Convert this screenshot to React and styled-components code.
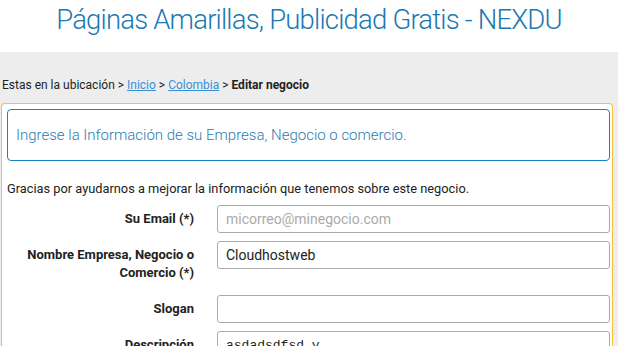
import React from "react";
import styled, { createGlobalStyle } from "styled-components";

const GlobalStyle = createGlobalStyle`
  body {
    margin: 0;
    font-family: Roboto, "Noto Sans", sans-serif;
    background: #fff;
  }
`;

const Header = styled.header`
  box-sizing: border-box;
  height: 52px;
  padding-top: 3px;
  text-align: center;
`;

const Title = styled.h1`
  margin: 0;
  font-size: 27.5px;
  line-height: 34px;
  font-weight: 300;
  color: #1b78b2;
  letter-spacing: -0.8px;
`;

const Main = styled.main`
  background: #ededed;
  padding: 26px 5px 0 1px;
  min-height: 300px;
`;

const Breadcrumb = styled.div`
  font-size: 12px;
  color: #222;
  padding-left: 1px;
  margin-bottom: 11px;

  a {
    color: #3a8fd4;
    text-decoration: underline;
  }

  strong {
    font-weight: 700;
  }
`;

const Panel = styled.section`
  background: #fff;
  border: 1px solid #f4c232;
  border-bottom: none;
  border-radius: 4px 4px 0 0;
  padding: 5px 2px 0 5px;
`;

const Notice = styled.div`
  border: 1px solid #1a82c2;
  border-radius: 4px;
  height: 50px;
  display: flex;
  align-items: center;
  padding-left: 8px;
  font-size: 15px;
  font-weight: 300;
  color: #2c7cb3;
`;

const Intro = styled.p`
  margin: 20px 0 9px;
  font-size: 12.8px;
  color: #222;
`;

const Form = styled.form`
  display: grid;
  grid-template-columns: 187px 1fr;
  column-gap: 23px;
  row-gap: 8px;
`;

const Label = styled.label`
  text-align: right;
  font-size: 13px;
  font-weight: 700;
  color: #222;
  line-height: 18px;
  padding: ${(p) => (p.$tall ? "5px 0 5px" : "5px 0 0")};
`;

const Input = styled.input`
  box-sizing: border-box;
  height: 28px;
  width: 100%;
  border: 1px solid #aaa;
  border-radius: 3px;
  padding: 0 8px;
  font-family: Roboto, sans-serif;
  font-size: 14px;
  color: #222;
  background: #fff;

  &::placeholder {
    color: #aaa;
  }
`;

const TextArea = styled.textarea`
  box-sizing: border-box;
  height: 60px;
  width: 100%;
  border: 1px solid #aaa;
  border-radius: 3px;
  padding: 6px 8px;
  font-family: "Liberation Mono", monospace;
  font-size: 13px;
  color: #222;
  resize: none;
`;

export default function App() {
  return (
    <>
      <GlobalStyle />
      <Header>
        <Title>Páginas Amarillas, Publicidad Gratis - NEXDU</Title>
      </Header>
      <Main>
        <Breadcrumb>
          Estas en la ubicación &gt; <a href="#">Inicio</a> &gt;{" "}
          <a href="#">Colombia</a> &gt; <strong>Editar negocio</strong>
        </Breadcrumb>
        <Panel>
          <Notice>Ingrese la Información de su Empresa, Negocio o comercio.</Notice>
          <Intro>Gracias por ayudarnos a mejorar la información que tenemos sobre este negocio.</Intro>
          <Form>
            <Label>Su Email (*)</Label>
            <Input placeholder="micorreo@minegocio.com" />
            <Label $tall>
              Nombre Empresa, Negocio o
              <br />
              Comercio (*)
            </Label>
            <Input defaultValue="Cloudhostweb" />
            <Label>Slogan</Label>
            <Input />
            <Label>Descripción</Label>
            <TextArea defaultValue="asdadsdfsd y" />
          </Form>
        </Panel>
      </Main>
    </>
  );
}
